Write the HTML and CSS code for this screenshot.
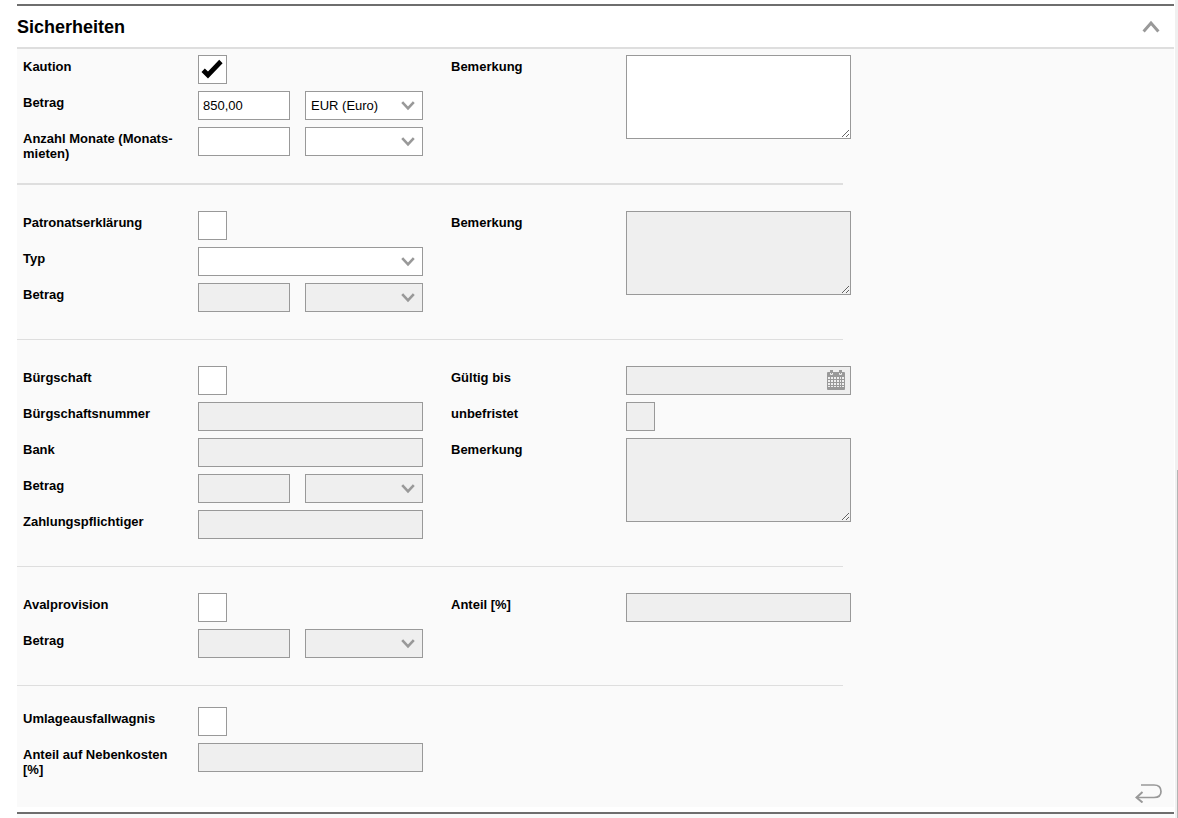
FILE: index.html
```html
<!DOCTYPE html>
<html lang="de">
<head>
    <meta charset="UTF-8">
    <meta name="viewport" content="width=device-width, initial-scale=1.0">
    <title>Sicherheiten</title>
    <link rel="stylesheet" href="styles.css">
</head>
<body>
    <!-- Icons -->
    <svg class="icon-defs" width="0" height="0" aria-hidden="true">
        <symbol id="chevron" viewBox="0 0 14 10">
            <path d="M1.2 1.2 L7 7.4 L12.8 1.2" fill="none" stroke="#999" stroke-width="2.6"/>
        </symbol>
        <symbol id="check" viewBox="0 0 22 20">
            <path d="M0.5 13 L3.8 9.4 L7 12.4 L18.2 0.8 L21.6 4.2 L7 19.6 Z" fill="#000"/>
        </symbol>
    </svg>

    <main class="page">
        <section class="panel">
            <header class="panel-header">
                <h2>Sicherheiten</h2>
                <button type="button" class="icon-button" aria-label="Zuklappen">
                    <svg width="18" height="13" viewBox="0 0 18 13">
                        <path d="M1.6 11.4 L9 3 L16.4 11.4" fill="none" stroke="#999" stroke-width="3"/>
                    </svg>
                </button>
            </header>

            <form class="panel-body">
                <!-- Kaution -->
                <div class="group">
                    <div class="column">
                        <div class="row">
                            <label for="kaution">Kaution</label>
                            <span class="check-wrap">
                                <input type="checkbox" id="kaution" checked>
                                <svg class="check-icon"><use href="#check"/></svg>
                            </span>
                        </div>
                        <div class="row">
                            <label for="kaution-betrag">Betrag</label>
                            <div class="pair">
                                <input type="text" id="kaution-betrag" value="850,00">
                                <span class="select-wrap">
                                    <select aria-label="Währung"><option>EUR (Euro)</option></select>
                                    <svg class="chevron"><use href="#chevron"/></svg>
                                </span>
                            </div>
                        </div>
                        <div class="row">
                            <label for="monate">Anzahl Monate (Monats&shy;mieten)</label>
                            <div class="pair">
                                <input type="text" id="monate">
                                <span class="select-wrap">
                                    <select aria-label="Mietart"><option></option></select>
                                    <svg class="chevron"><use href="#chevron"/></svg>
                                </span>
                            </div>
                        </div>
                    </div>
                    <div class="column">
                        <div class="row">
                            <label for="kaution-bemerkung">Bemerkung</label>
                            <textarea id="kaution-bemerkung"></textarea>
                        </div>
                    </div>
                </div>
                <hr class="thick">

                <!-- Patronatserklärung -->
                <div class="group">
                    <div class="column">
                        <div class="row">
                            <label for="patronat">Patronatserklärung</label>
                            <input type="checkbox" id="patronat">
                        </div>
                        <div class="row">
                            <label for="typ">Typ</label>
                            <span class="select-wrap">
                                <select id="typ"><option></option></select>
                                <svg class="chevron"><use href="#chevron"/></svg>
                            </span>
                        </div>
                        <div class="row">
                            <label for="patronat-betrag">Betrag</label>
                            <div class="pair">
                                <input type="text" id="patronat-betrag" disabled>
                                <span class="select-wrap">
                                    <select aria-label="Währung" disabled><option></option></select>
                                    <svg class="chevron"><use href="#chevron"/></svg>
                                </span>
                            </div>
                        </div>
                    </div>
                    <div class="column">
                        <div class="row">
                            <label for="patronat-bemerkung">Bemerkung</label>
                            <textarea id="patronat-bemerkung" disabled></textarea>
                        </div>
                    </div>
                </div>
                <hr>

                <!-- Bürgschaft -->
                <div class="group">
                    <div class="column">
                        <div class="row">
                            <label for="buergschaft">Bürgschaft</label>
                            <input type="checkbox" id="buergschaft">
                        </div>
                        <div class="row">
                            <label for="nummer">Bürgschaftsnummer</label>
                            <input type="text" id="nummer" disabled>
                        </div>
                        <div class="row">
                            <label for="bank">Bank</label>
                            <input type="text" id="bank" disabled>
                        </div>
                        <div class="row">
                            <label for="buergschaft-betrag">Betrag</label>
                            <div class="pair">
                                <input type="text" id="buergschaft-betrag" disabled>
                                <span class="select-wrap">
                                    <select aria-label="Währung" disabled><option></option></select>
                                    <svg class="chevron"><use href="#chevron"/></svg>
                                </span>
                            </div>
                        </div>
                        <div class="row">
                            <label for="zahlungspflichtiger">Zahlungspflichtiger</label>
                            <input type="text" id="zahlungspflichtiger" disabled>
                        </div>
                    </div>
                    <div class="column">
                        <div class="row">
                            <label for="gueltig">Gültig bis</label>
                            <div class="date-wrap">
                                <input type="text" id="gueltig" disabled>
                                <svg class="calendar" viewBox="0 0 18 20">
                                    <path d="M0 3 Q0 2 1 2 H17 Q18 2 18 3 V19 Q18 20 17 20 H1 Q0 20 0 19 Z" fill="#999"/>
                                    <path d="M3 0 H6 V4 H3 Z M12 0 H15 V4 H12 Z" fill="#999"/>
                                    <path d="M3.5 3 V4.5 H5.5 V3 M12.5 3 V4.5 H14.5 V3" fill="none" stroke="#efefef"/>
                                    <g fill="#efefef">
                                        <path d="M1 7 h2v2h-2z M4 7 h2v2h-2z M7 7 h2v2h-2z M10 7 h2v2h-2z M13 7 h1v2h-1z M15 7 h2v2h-2z"/>
                                        <path d="M1 10 h2v2h-2z M4 10 h2v2h-2z M7 10 h2v2h-2z M10 10 h2v2h-2z M13 10 h1v2h-1z M15 10 h2v2h-2z"/>
                                        <path d="M1 13 h2v2h-2z M4 13 h2v2h-2z M7 13 h2v2h-2z M10 13 h2v2h-2z M13 13 h1v2h-1z M15 13 h2v2h-2z"/>
                                        <path d="M1 16 h2v1h-2z M4 16 h2v1h-2z M7 16 h2v1h-2z M10 16 h2v1h-2z M13 16 h1v1h-1z M15 16 h2v1h-2z"/>
                                    </g>
                                </svg>
                            </div>
                        </div>
                        <div class="row">
                            <label for="unbefristet">unbefristet</label>
                            <input type="checkbox" id="unbefristet" disabled>
                        </div>
                        <div class="row">
                            <label for="buergschaft-bemerkung">Bemerkung</label>
                            <textarea id="buergschaft-bemerkung" disabled></textarea>
                        </div>
                    </div>
                </div>
                <hr>

                <!-- Avalprovision -->
                <div class="group">
                    <div class="column">
                        <div class="row">
                            <label for="aval">Avalprovision</label>
                            <input type="checkbox" id="aval">
                        </div>
                        <div class="row">
                            <label for="aval-betrag">Betrag</label>
                            <div class="pair">
                                <input type="text" id="aval-betrag" disabled>
                                <span class="select-wrap">
                                    <select aria-label="Währung" disabled><option></option></select>
                                    <svg class="chevron"><use href="#chevron"/></svg>
                                </span>
                            </div>
                        </div>
                    </div>
                    <div class="column">
                        <div class="row">
                            <label for="anteil">Anteil [%]</label>
                            <input type="text" id="anteil" disabled>
                        </div>
                    </div>
                </div>
                <hr>

                <!-- Umlageausfallwagnis -->
                <div class="group">
                    <div class="column">
                        <div class="row">
                            <label for="umlage">Umlageausfallwagnis</label>
                            <input type="checkbox" id="umlage">
                        </div>
                        <div class="row">
                            <label for="nebenkosten">Anteil auf Nebenkosten [%]</label>
                            <input type="text" id="nebenkosten" disabled>
                        </div>
                    </div>
                </div>

                <div class="panel-actions">
                    <button type="button" class="icon-button" aria-label="Zurück">
                        <svg width="28" height="20" viewBox="0 0 28 20">
                            <path d="M6 2 H19 Q26 2 26 8.5 Q26 14.5 19 14.5 H2" fill="none" stroke="#999" stroke-width="1.7"/>
                            <path d="M7.5 9 L1.5 14.5 L7.5 19.5" fill="none" stroke="#999" stroke-width="2"/>
                        </svg>
                    </button>
                </div>
            </form>
        </section>
        <div class="next-panel"></div>
    </main>
    <div class="scrollbar"><div class="thumb"></div></div>
</body>
</html>
```
FILE: styles.css
```css
* {
    box-sizing: border-box;
}

body {
    display: flex;
    min-height: 100vh;
    margin: 0;
    background-color: #fff;
    color: #000;
    font-family: "Liberation Sans", Arial, sans-serif;
    font-size: 13px;
    line-height: 15px;
}

.icon-defs {
    position: absolute;
}

.page {
    display: flex;
    flex-direction: column;
    flex: 1;
    padding: 4px 1px 0 17px;
}

/* Panel */
.panel {
    border-top: 2px solid #6e6e6e;
}

.panel-header {
    display: flex;
    align-items: center;
    justify-content: space-between;
    height: 43px;
    padding-right: 14px;
    border-bottom: 2px solid #dedede;
}

h2 {
    margin: 0;
    font-size: 18px;
    line-height: 20px;
}

.icon-button {
    display: block;
    padding: 0;
    border: none;
    background: none;
    cursor: pointer;
}

.icon-button svg {
    display: block;
}

.panel-body {
    padding-top: 6px;
    background-color: #fafafa;
}

.group {
    display: flex;
    gap: 28px;
    padding-left: 6px;
}

.column {
    width: 400px;
}

.row {
    display: flex;
    align-items: flex-start;
    min-height: 36px;
}

label {
    width: 175px;
    padding: 4px 12px 0 0;
    font-weight: bold;
}

hr {
    max-width: 826px;
    margin: 20px 0 26px;
    border: none;
    border-top: 1px solid #dedede;
}

hr.thick {
    border-top-width: 2px;
}

hr:last-of-type {
    margin-bottom: 21px;
}

/* Fields */
input,
select,
textarea {
    display: block;
    width: 225px;
    height: 29px;
    margin: 0;
    padding: 0 5px;
    border: 1px solid #999;
    border-radius: 0;
    background-color: #fff;
    color: #000;
    font-family: inherit;
    font-size: 13px;
    appearance: none;
}

input[type="text"] {
    padding: 0 4px;
}

input[type="checkbox"] {
    width: 29px;
}

textarea {
    height: 84px;
}

input:disabled,
select:disabled,
textarea:disabled {
    background-color: #efefef;
    opacity: 1;
}

.pair {
    display: grid;
    grid-template-columns: 92px 118px;
    gap: 15px;
}

.pair input,
.pair select {
    width: 100%;
}

.check-wrap,
.select-wrap,
.date-wrap {
    position: relative;
}

.check-icon {
    position: absolute;
    top: 4px;
    left: 3px;
    width: 22px;
    height: 20px;
    pointer-events: none;
}

.check-icon,
.chevron {
    display: none;
}

input:checked + .check-icon,
select + .chevron {
    display: block;
}

.chevron {
    position: absolute;
    top: 10px;
    right: 8px;
    width: 14px;
    height: 10px;
    pointer-events: none;
}

.calendar {
    position: absolute;
    top: 4px;
    right: 6px;
    width: 18px;
    height: 20px;
}

.panel-actions {
    display: flex;
    justify-content: flex-end;
    padding: 4px 11px 4px 0;
}

.next-panel {
    flex: 1;
    margin-top: 5px;
    border-top: 2px solid #6e6e6e;
    background-color: #fafafa;
}

/* Scrollbar */
.scrollbar {
    display: flex;
    flex-direction: column;
    justify-content: flex-end;
    width: 3px;
    padding-left: 2px;
    background-color: #f0f0f0;
}

.thumb {
    height: 348px;
    background-color: #b4b4b4;
}
```
